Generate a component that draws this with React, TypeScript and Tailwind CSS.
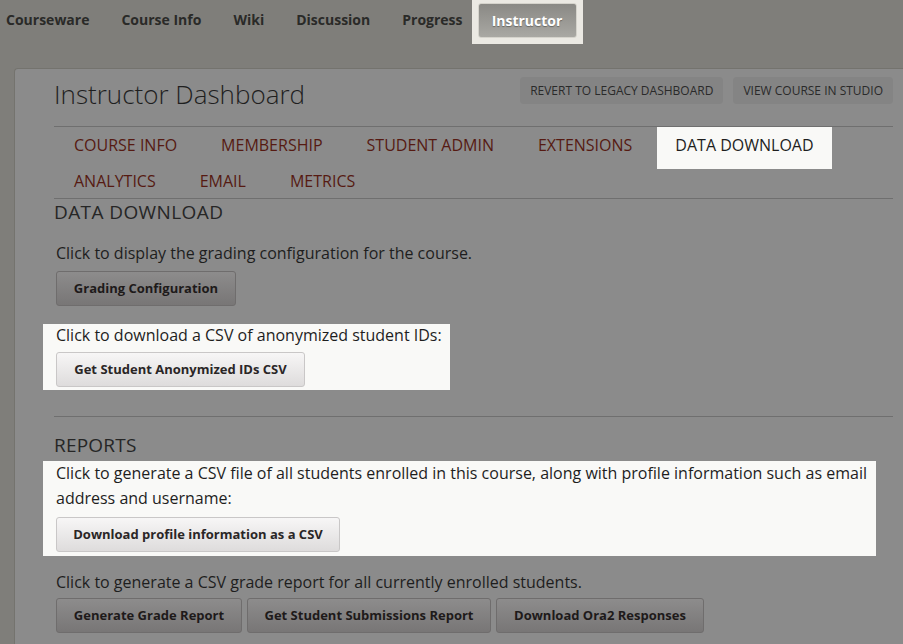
import React from "react";

const Btn = ({ label, light, w }: { label: string; light?: boolean; w?: string }) => (
  <button
    className={
      "h-[35px] whitespace-nowrap rounded-[3px] border px-[14px] text-[13px] font-bold " +
      (light
        ? "border-[#c9c7c7] bg-gradient-to-b from-[#f7f6f6] to-[#dedcdc] text-[#2a2626] "
        : "border-[#6f6d6d] bg-gradient-to-b from-[#8d8c8c] to-[#787676] text-[#1e1a1a] ") +
      (w ?? "")
    }
  >
    {label}
  </button>
);

export default function App() {
  const navItems = ["Courseware", "Course Info", "Wiki", "Discussion", "Progress"];
  const row1 = ["COURSE INFO", "MEMBERSHIP", "STUDENT ADMIN", "EXTENSIONS"];
  const row2 = ["ANALYTICS", "EMAIL", "METRICS"];
  return (
    <div
      className="w-[903px] h-[644px] overflow-hidden bg-[#7f7e7a] text-[#1e1e1e]"
      style={{ fontFamily: "'Open Sans', 'Liberation Sans', sans-serif" }}
    >
      {/* top nav */}
      <div className="flex h-[44px] items-start pl-[6px]">
        <div className="flex h-[38px] items-center gap-[32px] text-[14px] font-bold text-[#2a2a28]">
          {navItems.map((n) => (
            <span key={n} className="whitespace-nowrap">{n}</span>
          ))}
        </div>
        <div className="ml-[9px] h-[44px] w-[111px] bg-[#ebe9e3] px-[6px] pt-[3px]">
          <div className="flex h-[35px] items-center justify-center rounded-[3px] border border-[#d5d3cc] bg-gradient-to-b from-[#8a8985] to-[#a9a8a3] text-[14px] font-bold text-white [text-shadow:0_1px_1px_rgba(0,0,0,0.35)]">
            Instructor
          </div>
        </div>
      </div>

      {/* panel */}
      <div className="ml-[14px] mt-[24px] h-[600px] rounded-tl-[4px] border-l border-t border-[#74736e] bg-[#8b8b8b] pl-[39px] pr-[10px]">
        {/* header */}
        <div className="flex h-[58px] items-start justify-between border-b border-[#6f6f6f]">
          <h1 className="mt-[7px] text-[26px] font-light leading-[36px] text-[#1f1f1f]">Instructor Dashboard</h1>
          <div className="mt-[8px] flex gap-[10px]">
            <span className="flex h-[27px] items-center rounded-[4px] bg-[#848484] px-[10px] text-[12px] text-[#2a2a2a]">
              REVERT TO LEGACY DASHBOARD
            </span>
            <span className="flex h-[27px] items-center rounded-[4px] bg-[#848484] px-[10px] text-[12px] text-[#2a2a2a]">
              VIEW COURSE IN STUDIO
            </span>
          </div>
        </div>

        {/* tabs */}
        <div className="border-b border-[#6f6f6f] pl-[1px]">
          <div className="flex h-[42px] gap-[6px] text-[16px] text-[#561a12]">
            {row1.map((t) => (
              <span key={t} className="whitespace-nowrap px-[19px] pt-[6px]">
                {t}
              </span>
            ))}
            <span className="whitespace-nowrap bg-[#f9f9f7] px-[18px] pt-[6px] text-[#1e1e1e]">DATA DOWNLOAD</span>
          </div>
          <div className="flex h-[29px] gap-[6px] text-[16px] text-[#561a12]">
            {row2.map((t) => (
              <span key={t} className="whitespace-nowrap px-[19px]">
                {t}
              </span>
            ))}
          </div>
        </div>

        {/* data download section */}
        <h2 className="text-[19px] leading-[26px] tracking-[0.4px] text-[#262626]">DATA DOWNLOAD</h2>
        <div className="pl-[2px]">
          <p className="mt-[16px] text-[16px] leading-[24px]">Click to display the grading configuration for the course.</p>
          <div className="mt-[6px]">
            <Btn label="Grading Configuration" w="w-[180px]" />
          </div>
        </div>
        <div className="ml-[-11px] mt-[18px] w-[407px] bg-[#f9f9f7] pl-[13px] pb-[3px]">
          <p className="text-[16px] leading-[22px]">Click to download a CSV of anonymized student IDs:</p>
          <div className="mt-[6px]">
            <Btn label="Get Student Anonymized IDs CSV" light w="w-[249px] h-[34px]" />
          </div>
        </div>

        <div className="mt-[26px] border-t border-[#6f6f6f] pt-[15px]">
          <h2 className="text-[19px] leading-[26px] tracking-[0.2px] text-[#262626]">REPORTS</h2>
        </div>
        <div className="ml-[-11px] mt-[3px] w-[833px] bg-[#f9f9f7] pl-[13px] pb-[4px]">
          <p className="pr-[6px] text-[16px] leading-[25px]">
            Click to generate a CSV file of all students enrolled in this course, along with profile information such as email
            address and username:
          </p>
          <div className="mt-[6px]">
            <Btn label="Download profile information as a CSV" light w="w-[284px]" />
          </div>
        </div>

        <div className="pl-[2px]">
          <p className="mt-[14px] text-[16px] leading-[24px]">
            Click to generate a CSV grade report for all currently enrolled students.
          </p>
          <div className="mt-[4px] flex gap-[5px]">
            <Btn label="Generate Grade Report" w="w-[186px]" />
            <Btn label="Get Student Submissions Report" w="w-[244px]" />
            <Btn label="Download Ora2 Responses" w="w-[208px]" />
          </div>
        </div>
      </div>
    </div>
  );
}
